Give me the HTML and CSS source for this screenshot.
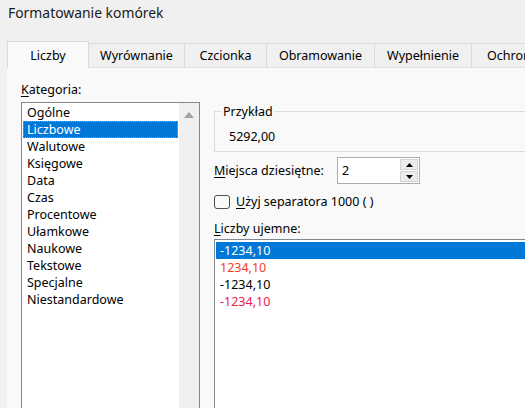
FILE: index.html
```html
<!DOCTYPE html>
<html lang="pl">
<head>
<meta charset="utf-8">
<title>Formatowanie komórek</title>
<link rel="stylesheet" href="styles.css">
</head>
<body>
<div class="dialog">
  <header class="title">Formatowanie komórek</header>
  <nav class="tabs">
    <div class="tab active">Liczby</div>
    <div class="tab">Wyrównanie</div>
    <div class="tab">Czcionka</div>
    <div class="tab">Obramowanie</div>
    <div class="tab">Wypełnienie</div>
    <div class="tab last">Ochrona</div>
  </nav>
  <main class="panel">
    <section class="left">
      <div class="label"><u>K</u>ategoria:</div>
      <div class="listbox cat">
        <ul class="items">
          <li>Ogólne</li>
          <li class="selected focused">Liczbowe</li>
          <li>Walutowe</li>
          <li>Księgowe</li>
          <li>Data</li>
          <li>Czas</li>
          <li>Procentowe</li>
          <li>Ułamkowe</li>
          <li>Naukowe</li>
          <li>Tekstowe</li>
          <li>Specjalne</li>
          <li>Niestandardowe</li>
        </ul>
        <div class="vscroll">
          <svg class="arrow-up" width="10" height="6" viewBox="0 0 10 6"><path d="M0 6 L5 0 L10 6 Z" fill="#a3a3a3"/></svg>
        </div>
      </div>
    </section>
    <section class="right">
      <fieldset class="sample">
        <legend>Przykład</legend>
        <div class="sample-value">5292,00</div>
      </fieldset>
      <div class="row decimals">
        <label class="row-label"><u>M</u>iejsca dziesiętne:</label>
        <div class="spin">
          <span class="spin-value">2</span>
          <div class="spin-btns">
            <div class="spin-btn"><svg width="7" height="4" viewBox="0 0 7 4"><path d="M0 4 L3.5 0 L7 4 Z" fill="#000"/></svg></div>
            <div class="spin-btn"><svg width="7" height="4" viewBox="0 0 7 4"><path d="M0 0 L3.5 4 L7 0 Z" fill="#000"/></svg></div>
          </div>
        </div>
      </div>
      <div class="row check">
        <span class="checkbox"></span>
        <span><u>U</u>żyj separatora 1000 ( )</span>
      </div>
      <div class="label neg-label"><u>L</u>iczby ujemne:</div>
      <div class="listbox neg">
        <ul class="items">
          <li class="selected">-1234,10</li>
          <li class="red1">1234,10</li>
          <li>-1234,10</li>
          <li class="red2">-1234,10</li>
        </ul>
      </div>
    </section>
  </main>
</div>
</body>
</html>
```

FILE: styles.css
```css
* { box-sizing: border-box; margin: 0; padding: 0; }
html, body { width: 525px; height: 408px; overflow: hidden; }
body {
  background: #f0f0f0;
  font-family: "Noto Sans", "Open Sans", sans-serif;
  font-size: 12.5px;
  color: #000;
}
u { text-decoration-thickness: 1px; text-underline-offset: 2px; }

.dialog { display: flex; flex-direction: column; width: 600px; height: 408px; }

.title { flex-shrink: 0; height: 41px; padding: 3px 0 0 8px; font-size: 13.9px; line-height: 20px; color: #1a1a1a; }

.tabs { flex-shrink: 0; display: flex; align-items: flex-end; height: 27px; margin-left: 7px; }
.tab {
  height: 25px;
  line-height: 23px;
  text-align: center;
  background: #f0f0f0;
  border-top: 1px solid #d9d9d9;
  border-right: 1px solid #d9d9d9;
  border-bottom: 1px solid #e2e2e2;
  white-space: nowrap;
}
.tab:first-child { border-left: 1px solid #d9d9d9; }
.tab.active { height: 27px; padding-top: 2px; background: #f9f9f9; border-bottom: none; }
.tab:nth-child(1) { width: 82px; }
.tab:nth-child(2) { width: 96px; }
.tab:nth-child(3) { width: 82px; }
.tab:nth-child(4) { width: 108px; }
.tab:nth-child(5) { width: 97px; }
.tab.last { width: 84px; text-align: left; padding-left: 15px; }

.panel {
  flex: 1;
  min-height: 0;
  overflow: hidden;
  display: flex;
  background: #f9f9f9;
  margin-left: 7px;
  padding: 13px 0 0 14px;
}

.label { height: 17px; line-height: 17px; }
.left { flex-shrink: 0; width: 179px; display: flex; flex-direction: column; }
.left .label { margin-bottom: 4px; }

.listbox { flex-shrink: 0; background: #fff; border: 1px solid #828790; }
.cat { display: flex; height: 320px; }
.items { list-style: none; }
.items li { height: 17px; line-height: 17px; white-space: nowrap; }
.cat .items { flex: 1; padding: 1px 1px 0 1px; }
.cat .items li { padding-left: 3px; border: 1px solid transparent; line-height: 15px; }
.items li.selected { background: #0078d7; color: #fff; }
.items li.focused { border: 1px dotted #f0892a; }
.vscroll {
  width: 20px;
  background: #f0f0f0;
  display: flex;
  justify-content: center;
  padding-top: 9px;
}
.arrow-up { display: block; }

.right { flex-shrink: 0; width: 360px; margin-left: 14px; padding-top: 22px; display: flex; flex-direction: column; }

.sample {
  flex-shrink: 0;
  border: 1px solid #dcdcdc;
  padding: 8px 0 6px 14px;
}
.sample legend { margin-left: -8px; padding: 0 2px; line-height: 17px; }
.sample-value { line-height: 17px; }

.row { flex-shrink: 0; display: flex; align-items: center; }
.decimals { margin-top: 5px; height: 27px; }
.row-label { width: 123px; }
.spin {
  width: 83px;
  height: 27px;
  display: flex;
  align-items: center;
  justify-content: space-between;
  background: #fff;
  border: 1px solid #adadad;
  padding: 0 1px 0 4px;
}
.spin-btns { display: flex; flex-direction: column; gap: 1px; }
.spin-btn {
  width: 18px;
  height: 11px;
  background: #ececec;
  border: 1px solid #d3d3d3;
  display: flex;
  align-items: center;
  justify-content: center;
}
.spin-btn svg { display: block; }

.check { margin-top: 9px; height: 17px; gap: 6px; }
.checkbox {
  width: 16px;
  height: 14px;
  border: 1px solid #4f4f4f;
  border-radius: 3px;
  background: #fbfbfb;
}

.neg-label { flex-shrink: 0; margin-top: 10px; margin-bottom: 2px; }
.neg { height: 200px; padding: 2px 0 0 1px; }
.neg .items li { padding-left: 4px; }
.red1 { color: #f0401c; }
.red2 { color: #f0204a; }
```
